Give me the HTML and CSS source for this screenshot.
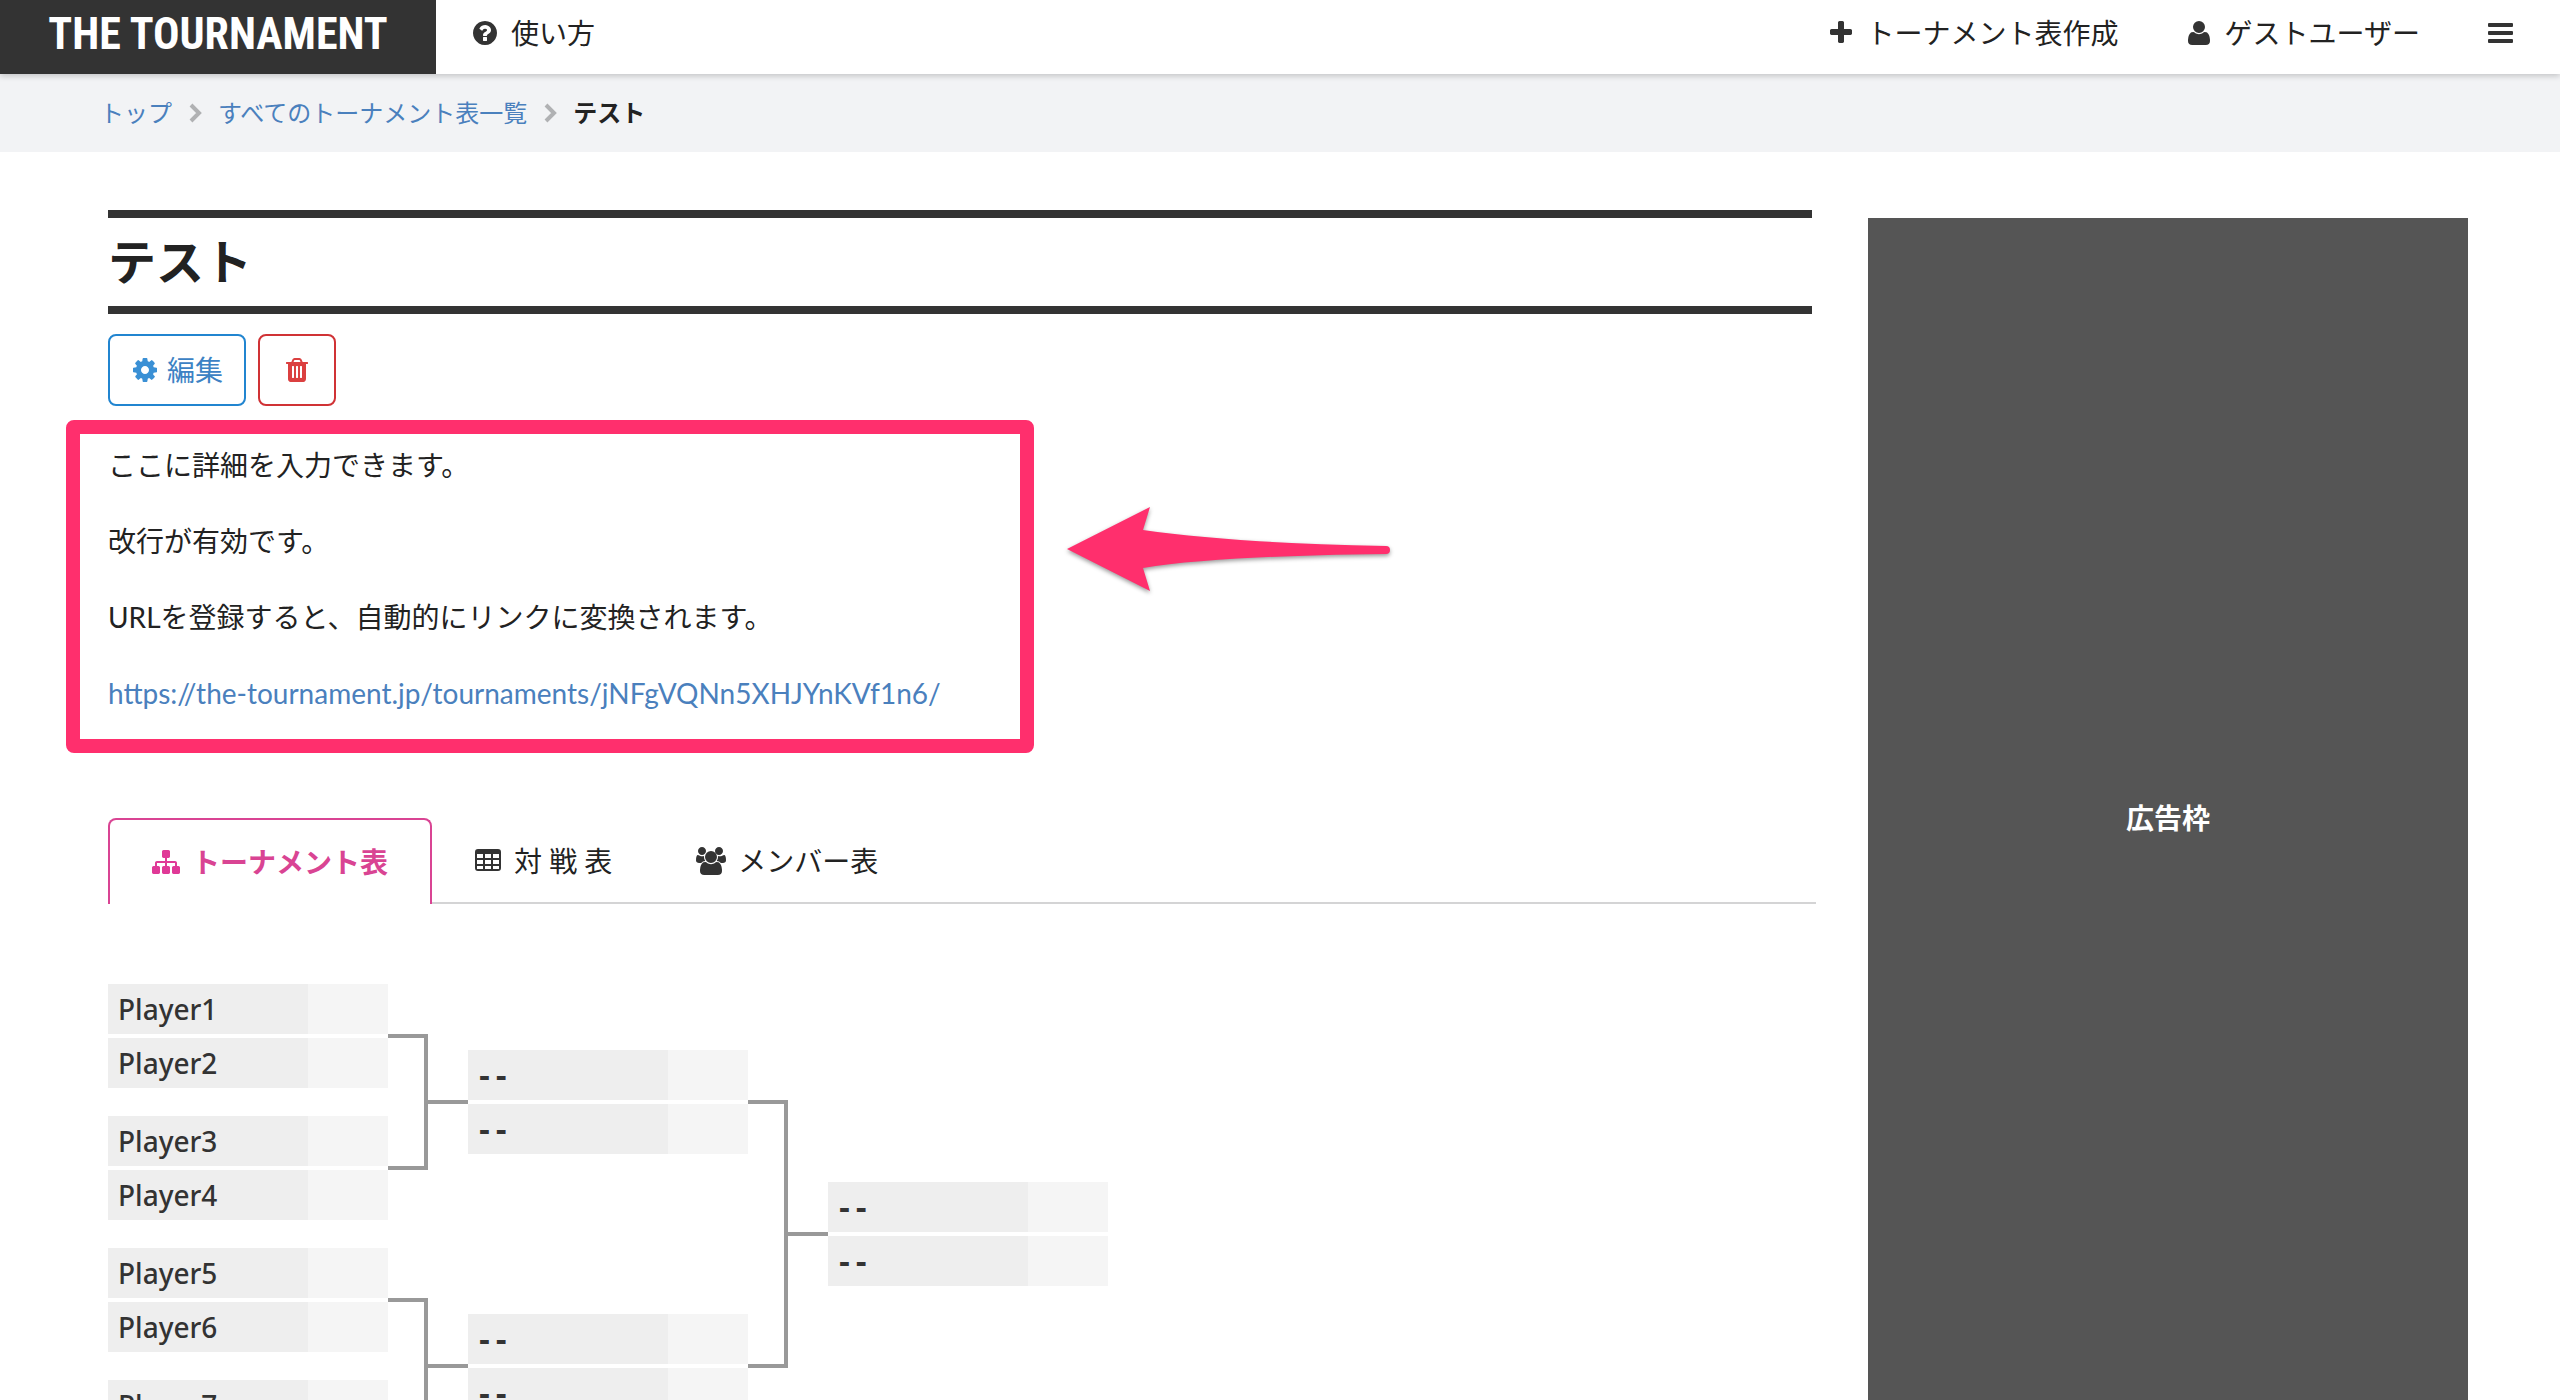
FILE: index.html
```html
<!DOCTYPE html>
<html lang="ja">
<head>
    <meta charset="utf-8">
    <title>テスト | THE TOURNAMENT</title>
    <link rel="stylesheet" href="styles.css">
</head>
<body>
    <header class="header">
        <a class="logo" href="#">THE TOURNAMENT</a>
        <nav class="nav">
            <a class="nav-item" href="#">
                <svg class="icon" viewBox="0 0 1792 1792"><path d="M1024 1376v-192q0-14-9-23t-23-9h-192q-14 0-23 9t-9 23v192q0 14 9 23t23 9h192q14 0 23-9t9-23zm256-672q0-88-55.5-163t-138.5-116-170-41q-243 0-371 213-15 24 8 42l132 100q7 6 19 6 16 0 25-12 53-68 86-92 34-24 86-24 48 0 85.5 26t37.5 59q0 38-20 61t-68 45q-63 28-115.5 86.5t-52.5 125.5v36q0 14 9 23t23 9h192q14 0 23-9t9-23q0-19 21.5-49.5t54.5-49.5q32-18 49-28.5t46-35 44.5-48 28-60.5 12.5-81zm384 192q0 209-103 385.5t-279.5 279.5-385.5 103-385.5-103-279.5-279.5-103-385.5 103-385.5 279.5-279.5 385.5-103 385.5 103 279.5 279.5 103 385.5z"/></svg>
                使い方
            </a>
            <a class="nav-item nav-right" href="#">
                <svg class="icon" viewBox="0 0 1792 1792"><path d="M1600 736v192q0 40-28 68t-68 28h-416v416q0 40-28 68t-68 28h-192q-40 0-68-28t-28-68v-416h-416q-40 0-68-28t-28-68v-192q0-40 28-68t68-28h416v-416q0-40 28-68t68-28h192q40 0 68 28t28 68v416h416q40 0 68 28t28 68z"/></svg>
                トーナメント表作成
            </a>
            <a class="nav-item" href="#">
                <svg class="icon" viewBox="0 0 1792 1792"><path d="M1600 1405q0 120-73 189.5t-194 69.5h-874q-121 0-194-69.5t-73-189.5q0-53 3.5-103.5t14-109 26.5-108.5 43-97.5 62-81 85.5-53.5 111.5-20q9 0 42 21.5t74.5 48 108 48 133.5 21.5 133.5-21.5 108-48 74.5-48 42-21.5q61 0 111.5 20t85.5 53.5 62 81 43 97.5 26.5 108.5 14 109 3.5 103.5zm-320-893q0 159-112.5 271.5t-271.5 112.5-271.5-112.5-112.5-271.5 112.5-271.5 271.5-112.5 271.5 112.5 112.5 271.5z"/></svg>
                ゲストユーザー
            </a>
            <button class="nav-item menu-btn" type="button" aria-label="メニュー">
                <svg class="icon" viewBox="0 0 28 28"><path d="M3 4h23a1 1 0 0 1 1 1v2a1 1 0 0 1-1 1H3a1 1 0 0 1-1-1V5a1 1 0 0 1 1-1zM3 12h23a1 1 0 0 1 1 1v2a1 1 0 0 1-1 1H3a1 1 0 0 1-1-1v-2a1 1 0 0 1 1-1zM3 20h23a1 1 0 0 1 1 1v2a1 1 0 0 1-1 1H3a1 1 0 0 1-1-1v-2a1 1 0 0 1 1-1z"/></svg>
            </button>
        </nav>
    </header>

    <nav class="breadcrumb">
        <a href="#">トップ</a>
        <svg class="chevron" viewBox="0 0 14 20"><path d="M3 2l8 8-8 8"/></svg>
        <a href="#">すべてのトーナメント表一覧</a>
        <svg class="chevron" viewBox="0 0 14 20"><path d="M3 2l8 8-8 8"/></svg>
        <strong>テスト</strong>
    </nav>

    <div class="container">
        <main class="main">
            <h1 class="title">テスト</h1>
            <div class="actions">
                <button class="btn btn-edit" type="button">
                    <svg class="icon" viewBox="0 0 1792 1792"><path d="M1152 896q0-106-75-181t-181-75-181 75-75 181 75 181 181 75 181-75 75-181zm512-109v222q0 12-8 23t-20 13l-185 28q-19 54-39 91 35 50 107 138 10 12 10 25t-9 23q-27 37-99 108t-94 71q-12 0-26-9l-138-108q-44 23-91 38-16 136-29 186-7 28-36 28h-222q-14 0-24.5-8.5t-11.5-21.5l-28-184q-49-16-90-37l-141 107q-10 9-25 9-14 0-25-11-126-114-165-168-7-10-7-23 0-12 8-23 15-21 51-66.5t54-70.5q-27-50-41-99l-183-27q-13-2-21-12.5t-8-23.5v-222q0-12 8-23t19-13l186-28q14-46 39-92-40-57-107-138-10-12-10-24 0-10 9-23 26-36 98.5-107.5t94.5-71.5q13 0 26 10l138 107q44-23 91-38 16-136 29-186 7-28 36-28h222q14 0 24.5 8.5t11.5 21.5l28 184q49 16 90 37l142-107q9-9 24-9 13 0 25 10 129 119 165 170 7 8 7 22 0 12-8 23-15 21-51 66.5t-54 70.5q26 50 41 98l183 28q13 2 21 12.5t8 23.5z"/></svg>
                    編集
                </button>
                <button class="btn btn-delete" type="button" aria-label="削除">
                    <svg class="icon" viewBox="0 0 1792 1792"><path d="M704 1376v-704q0-14-9-23t-23-9h-64q-14 0-23 9t-9 23v704q0 14 9 23t23 9h64q14 0 23-9t9-23zm256 0v-704q0-14-9-23t-23-9h-64q-14 0-23 9t-9 23v704q0 14 9 23t23 9h64q14 0 23-9t9-23zm256 0v-704q0-14-9-23t-23-9h-64q-14 0-23 9t-9 23v704q0 14 9 23t23 9h64q14 0 23-9t9-23zm-544-992h448l-48-117q-7-9-17-11h-317q-10 2-17 11zm928 32v64q0 14-9 23t-23 9h-96v948q0 83-47 143.5t-113 60.5h-832q-66 0-113-58.5t-47-141.5v-952h-96q-14 0-23-9t-9-23v-64q0-14 9-23t23-9h309l70-167q15-37 54-63t79-26h320q40 0 79 26t54 63l70 167h309q14 0 23 9t9 23z"/></svg>
                </button>
            </div>

            <div class="detail">
                <p>ここに詳細を入力できます。</p>
                <p>改行が有効です。</p>
                <p>URLを登録すると、自動的にリンクに変換されます。</p>
                <p><a href="#">https://the-tournament.jp/tournaments/jNFgVQNn5XHJYnKVf1n6/</a></p>
                <div class="marker"></div>
                <svg class="arrow" viewBox="0 0 328 88"><path d="M1 43L84 1l-7 23q90 13 243 16a4 4 0 0 1 0 8Q150 50 77 62l7 23z"/></svg>
            </div>

            <nav class="tabs">
                <a class="tab active" href="#">
                    <svg class="icon" viewBox="0 0 1792 1792"><path d="M1792 1248v320q0 40-28 68t-68 28h-320q-40 0-68-28t-28-68v-320q0-40 28-68t68-28h96v-192h-512v192h96q40 0 68 28t28 68v320q0 40-28 68t-68 28h-320q-40 0-68-28t-28-68v-320q0-40 28-68t68-28h96v-192h-512v192h96q40 0 68 28t28 68v320q0 40-28 68t-68 28h-320q-40 0-68-28t-28-68v-320q0-40 28-68t68-28h96v-192q0-52 38-90t90-38h512v-192h-96q-40 0-68-28t-28-68v-320q0-40 28-68t68-28h320q40 0 68 28t28 68v320q0 40-28 68t-68 28h-96v192h512q52 0 90 38t38 90v192h96q40 0 68 28t28 68z"/></svg>
                    トーナメント表
                </a>
                <a class="tab" href="#">
                    <svg class="icon" viewBox="0 0 28 28"><path fill-rule="evenodd" d="M4 2h20a3 3 0 0 1 3 3v16a3 3 0 0 1-3 3H4a3 3 0 0 1-3-3V5a3 3 0 0 1 3-3zM3 7v4h6V7zM11 7v4h6V7zM19 7v4h6V7zM3 13v4h6v-4zM11 13v4h6v-4zM19 13v4h6v-4zM3 19v3h6v-3zM11 19v3h6v-3zM19 19v3h6v-3z"/></svg>
                    対 戦 表
                </a>
                <a class="tab" href="#">
                    <svg class="icon icon-wide" viewBox="-64 0 1920 1792"><path d="M529 896q-162 5-265 128h-134q-82 0-138-40.5t-56-118.5q0-353 124-353 6 0 43.5 21t97.5 42.5 119 21.5q67 0 133-23-5 37-5 66 0 139 81 256zm1071 637q0 120-73 189.5t-194 69.5h-874q-121 0-194-69.5t-73-189.5q0-53 3.5-103.5t14-109 26.5-108.5 43-97.5 62-81 85.5-53.5 111.5-20q10 0 43 21.5t73 48 107 48 135 21.5 135-21.5 107-48 73-48 43-21.5q61 0 111.5 20t85.5 53.5 62 81 43 97.5 26.5 108.5 14 109 3.5 103.5zm-1024-1277q0 106-75 181t-181 75-181-75-75-181 75-181 181-75 181 75 75 181zm704 384q0 159-112.5 271.5t-271.5 112.5-271.5-112.5-112.5-271.5 112.5-271.5 271.5-112.5 271.5 112.5 112.5 271.5zm576 225q0 78-56 118.5t-138 40.5h-134q-103-123-265-128 81-117 81-256 0-29-5-66 66 23 133 23 59 0 119-21.5t97.5-42.5 43.5-21q124 0 124 353zm-192-609q0 106-75 181t-181 75-181-75-75-181 75-181 181-75 181 75 75 181z"/></svg>
                    メンバー表
                </a>
            </nav>

            <div class="bracket">
                <div class="round">
                    <div class="match">
                        <div class="player">Player1</div>
                        <div class="player">Player2</div>
                    </div>
                    <div class="match">
                        <div class="player">Player3</div>
                        <div class="player">Player4</div>
                    </div>
                    <div class="match">
                        <div class="player">Player5</div>
                        <div class="player">Player6</div>
                    </div>
                    <div class="match">
                        <div class="player">Player7</div>
                        <div class="player">Player8</div>
                    </div>
                </div>
                <div class="joints">
                    <div class="joint"></div>
                    <div class="joint"></div>
                </div>
                <div class="round">
                    <div class="match">
                        <div class="player empty">--</div>
                        <div class="player empty">--</div>
                    </div>
                    <div class="match">
                        <div class="player empty">--</div>
                        <div class="player empty">--</div>
                    </div>
                </div>
                <div class="joints">
                    <div class="joint"></div>
                </div>
                <div class="round">
                    <div class="match">
                        <div class="player empty">--</div>
                        <div class="player empty">--</div>
                    </div>
                </div>
            </div>
        </main>

        <aside class="ad">広告枠</aside>
    </div>
</body>
</html>
```

FILE: styles.css
```css
* {
    box-sizing: border-box;
}
body {
    margin: 0;
    background: #fff;
    color: #222;
    font-family: Lato, "Noto Sans CJK JP", sans-serif;
    font-size: 28px;
    line-height: 38px;
}
a {
    color: #4a80bd;
    text-decoration: none;
}
button {
    font: inherit;
    cursor: pointer;
}
.icon {
    width: 28px;
    height: 28px;
    fill: currentColor;
    flex: none;
}
.icon-wide {
    width: 30px;
}

/* header */
.header {
    display: flex;
    height: 74px;
    background: #fff;
    box-shadow: 0 2px 6px rgba(0, 0, 0, 0.2);
    position: relative;
}
.logo {
    width: 436px;
    padding-bottom: 6px;
    background: #333;
    color: #fff;
    font-family: "Roboto Condensed", "Open Sans Condensed", "Liberation Sans Narrow", "Liberation Sans", sans-serif;
    font-size: 44px;
    font-weight: bold;
    white-space: nowrap;
    display: flex;
    align-items: center;
    justify-content: center;
}
.nav {
    flex: 1;
    display: flex;
    align-items: center;
    padding: 0 46px 8px 35px;
}
.nav-item {
    display: flex;
    align-items: center;
    gap: 12px;
    color: #222;
}
.nav-item .icon {
    color: #333;
}
.nav-right {
    margin-left: auto;
    margin-right: 66px;
}
.menu-btn {
    border: 0;
    padding: 0;
    margin-left: 66px;
    background: none;
}

/* breadcrumb */
.breadcrumb {
    display: flex;
    align-items: center;
    gap: 16px;
    height: 78px;
    padding: 0 100px;
    background: #f2f3f5;
    font-size: 24px;
}
.chevron {
    width: 14px;
    height: 20px;
    fill: none;
    stroke: #b0b1b3;
    stroke-width: 4;
}

/* layout */
.container {
    display: flex;
    align-items: flex-start;
    gap: 52px;
    padding: 58px 92px 60px 108px;
}
.main {
    flex: 1;
}
.title {
    margin: 0 4px 20px 0;
    padding: 16px 0;
    border-top: 8px solid #333;
    border-bottom: 8px solid #333;
    font-size: 48px;
    line-height: 56px;
}
.actions {
    display: flex;
    gap: 12px;
    margin-bottom: 40px;
}
.btn {
    display: flex;
    align-items: center;
    justify-content: center;
    gap: 8px;
    height: 72px;
    padding: 0 21px;
    border: 2px solid;
    border-radius: 8px;
    background: #fff;
    white-space: nowrap;
}
.btn-edit {
    border-color: #2185d0;
    color: #3c82c4;
}
.btn-edit .icon {
    color: #3a90d5;
}
.btn-delete {
    width: 78px;
    border-color: #d03235;
    color: #db4040;
}

/* detail text */
.detail {
    position: relative;
    display: flex;
    flex-direction: column;
    gap: 38px;
    margin-bottom: 106px;
}
.detail p {
    margin: 0;
}
.marker {
    position: absolute;
    top: -26px;
    left: -42px;
    width: 968px;
    height: 333px;
    border: 14px solid #ff2f6d;
    border-radius: 8px;
    pointer-events: none;
}
.arrow {
    position: absolute;
    top: 60px;
    left: 958px;
    width: 328px;
    height: 88px;
    overflow: visible;
    fill: #ff2f6d;
    filter: drop-shadow(0 2px 2px rgba(0, 0, 0, 0.4));
}

/* tabs */
.tabs {
    display: flex;
    height: 86px;
    border-bottom: 2px solid #d4d4d5;
    margin-bottom: 66px;
}
.tab {
    display: flex;
    align-items: center;
    gap: 12px;
    height: 86px;
    padding: 0 42px;
    color: #222;
}
.tab .icon {
    color: #333;
}
.tab.active {
    border: 2px solid #d94493;
    border-bottom: 0;
    border-radius: 8px 8px 0 0;
    background: #fff;
    color: #d94493;
    font-weight: bold;
}
.tab.active .icon {
    color: #e03997;
}

/* bracket */
.bracket {
    display: flex;
    color: #333;
    font-family: "Noto Sans", sans-serif;
    font-weight: 500;
}
.round {
    display: flex;
    flex-direction: column;
    width: 280px;
}
.match {
    flex: 1;
    display: flex;
    flex-direction: column;
    justify-content: center;
    gap: 4px;
    padding: 14px 0;
}
.player {
    height: 50px;
    padding: 6px 10px;
    border-right: 80px solid #f5f5f5;
    background: #eee;
}
.player.empty {
    padding: 8px;
    font-family: "DejaVu Sans Mono", monospace;
    font-weight: bold;
}
.joints {
    display: flex;
    flex-direction: column;
    width: 80px;
}
.joint {
    flex: 1;
    display: grid;
    grid-template-columns: 40px 40px;
    grid-template-rows: 1fr 2fr 1fr;
}
.joint::before,
.joint::after {
    content: "";
    grid-row: 2;
}
.joint::before {
    margin: -2px 0;
    border: 4px solid #999;
    border-left: 0;
}
.joint::after {
    align-self: center;
    height: 4px;
    background: #999;
}

.ad {
    display: flex;
    align-items: center;
    justify-content: center;
    width: 600px;
    height: 1200px;
    margin-top: 8px;
    background: #555;
    color: #fff;
    font-weight: bold;
}
```
